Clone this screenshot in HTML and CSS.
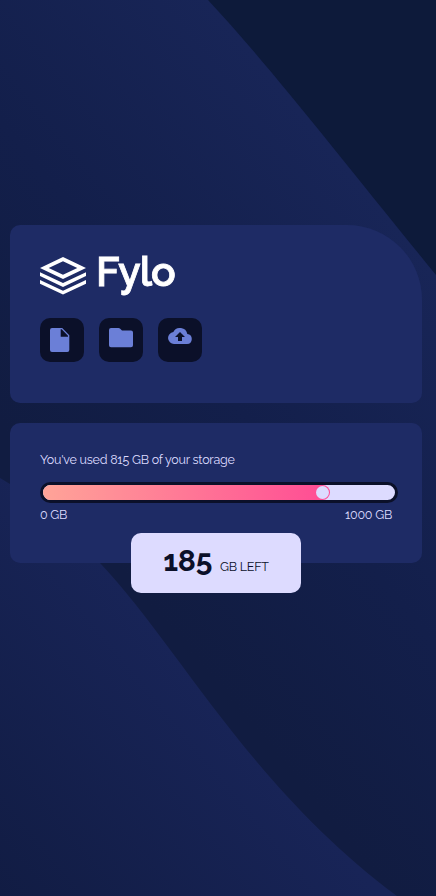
FILE: index.html
```
<!DOCTYPE html>
<html lang="en">
<head>
<meta charset="utf-8">
<meta name="viewport" content="width=device-width, initial-scale=1">
<title>Fylo data storage</title>
<link rel="stylesheet" href="styles.css">
</head>
<body>
<svg class="backdrop" viewBox="0 0 436 896" preserveAspectRatio="none" aria-hidden="true">
  <defs>
    <linearGradient id="upper" gradientUnits="userSpaceOnUse" x1="-208" y1="173" x2="123" y2="-102"><stop stop-color="#111c41"/><stop offset=".45" stop-color="#131f4b"/><stop offset="1" stop-color="#182557"/></linearGradient>
    <linearGradient id="lower" gradientUnits="userSpaceOnUse" x1="-447" y1="371" x2="-216" y2="179"><stop stop-color="#111c43"/><stop offset="1" stop-color="#182457"/></linearGradient>
  </defs>
  <path fill="url(#upper)" d="M0 0H436V896H0z"/>
  <path fill="#0d1a3a" d="M208 0C267 63 340 157 436 275V0z"/>
  <path fill="url(#lower)" d="M0 478C34 497 65 529 100 563C178 645 250 787 397 896H0z"/>
</svg>
<main class="page">
  <section class="card brand">
    <div class="logo">
      <svg class="logo-mark" viewBox="0 0 46 38" aria-hidden="true">
        <path fill="#fff" fill-rule="evenodd" d="M23 0 46 11 23 22 0 11zM23 4.2 8.7 11 23 17.8 37.3 11z"/>
        <path fill="#fff" d="M0 15.2 23 26 46 15.2V19L23 30 0 19zM0 22.9 23 33.7 46 22.9V26.7L23 37.6 0 26.7z"/>
      </svg>
      <span class="logo-name">Fylo</span>
    </div>
    <div class="actions">
      <div class="action"><svg width="20" height="24" viewBox="0 0 20 24" fill="#6b7fd7"><path fill-rule="evenodd" d="M2 0H12.2L19.3 7.3V22A2 2 0 0 1 17.3 24H2A2 2 0 0 1 0 22V2A2 2 0 0 1 2 0zM10.7 1.3V8.7H18V7.7L11.7 1.3z"/></svg></div>
      <div class="action"><svg width="24" height="20" viewBox="0 0 24 20" fill="#6b7fd7"><path d="M2 0H9.5Q10.5 0 11.2.8L13 2.5H22A2 2 0 0 1 24 4.5V17.3A2 2 0 0 1 22 19.3H2A2 2 0 0 1 0 17.3V2A2 2 0 0 1 2 0z"/></svg></div>
      <div class="action"><svg width="24" height="16" viewBox="0 0 24 16" fill="#6b7fd7"><path fill-rule="evenodd" d="M19.35 6.04A7.5 7.5 0 0 0 5.35 4.04 6 6 0 0 0 6 16H19A5 5 0 0 0 19.35 6.04zM14 9V13H10V9H7L12 4 17 9z"/></svg></div>
    </div>
  </section>
  <section class="card storage">
    <p class="usage">You've used 815 GB of your storage</p>
    <div class="track"><div class="fill"><span class="knob"></span></div></div>
    <div class="scale"><span>0 GB</span><span>1000 GB</span></div>
    <div class="left"><strong>185</strong><span class="left-label">GB LEFT</span></div>
  </section>
</main>
</body>
</html>
```
FILE: styles.css
```
* { box-sizing: border-box; }
body { margin: 0; font-family: Raleway, Lato, sans-serif; font-size: 12.5px; letter-spacing: -.24px; color: #dddbff; background: #101b40; }
.backdrop { position: fixed; inset: 0; width: 100%; height: 100%; z-index: -1; }
.page { min-height: 100vh; padding: 0 14px 108px 10px; display: flex; flex-direction: column; justify-content: center; gap: 20px; }
.card { background: #1e2b65; border-radius: 10px; }
.brand { height: 178px; padding: 30px; border-top-right-radius: 75px; }
.logo { display: flex; height: 40px; gap: 10px; }
.logo-mark { width: 46px; height: 38px; margin-top: 2px; }
.logo-name { font-weight: 650; font-size: 41px; line-height: 34px; letter-spacing: -1px; -webkit-text-stroke: .8px #fff; color: #fff; white-space: nowrap; }
.actions { display: flex; gap: 15px; margin-top: 23px; }
.action { width: 44px; height: 44px; padding: 10px; background: #0b1029; border-radius: 10px; }
.action svg { display: block; }
.storage { position: relative; height: 140px; padding: 30px 24px 0 30px; }
.usage { margin: 0; line-height: 14px; white-space: nowrap; }
.track { height: 21px; margin-top: 15px; background: #dddbff; border: 3px solid #0b1029; border-radius: 11px; }
.fill { width: 287px; height: 15px; border-radius: 8px; background: linear-gradient(90deg, #ffa498, #ff4b94); display: flex; justify-content: flex-end; align-items: center; padding-right: 1px; }
.knob { width: 13px; height: 13px; border-radius: 50%; background: #dddbff; }
.scale { display: flex; justify-content: space-between; margin-top: 5px; padding-right: 6px; line-height: 14px; }
.left { position: absolute; left: 121px; top: 110px; width: 170px; height: 60px; border-radius: 10px; background: #dddbff; color: #0b1029; display: flex; justify-content: center; align-items: baseline; gap: 8px; line-height: 56px; }
.left strong { font-size: 30px; font-weight: 700; }
```
